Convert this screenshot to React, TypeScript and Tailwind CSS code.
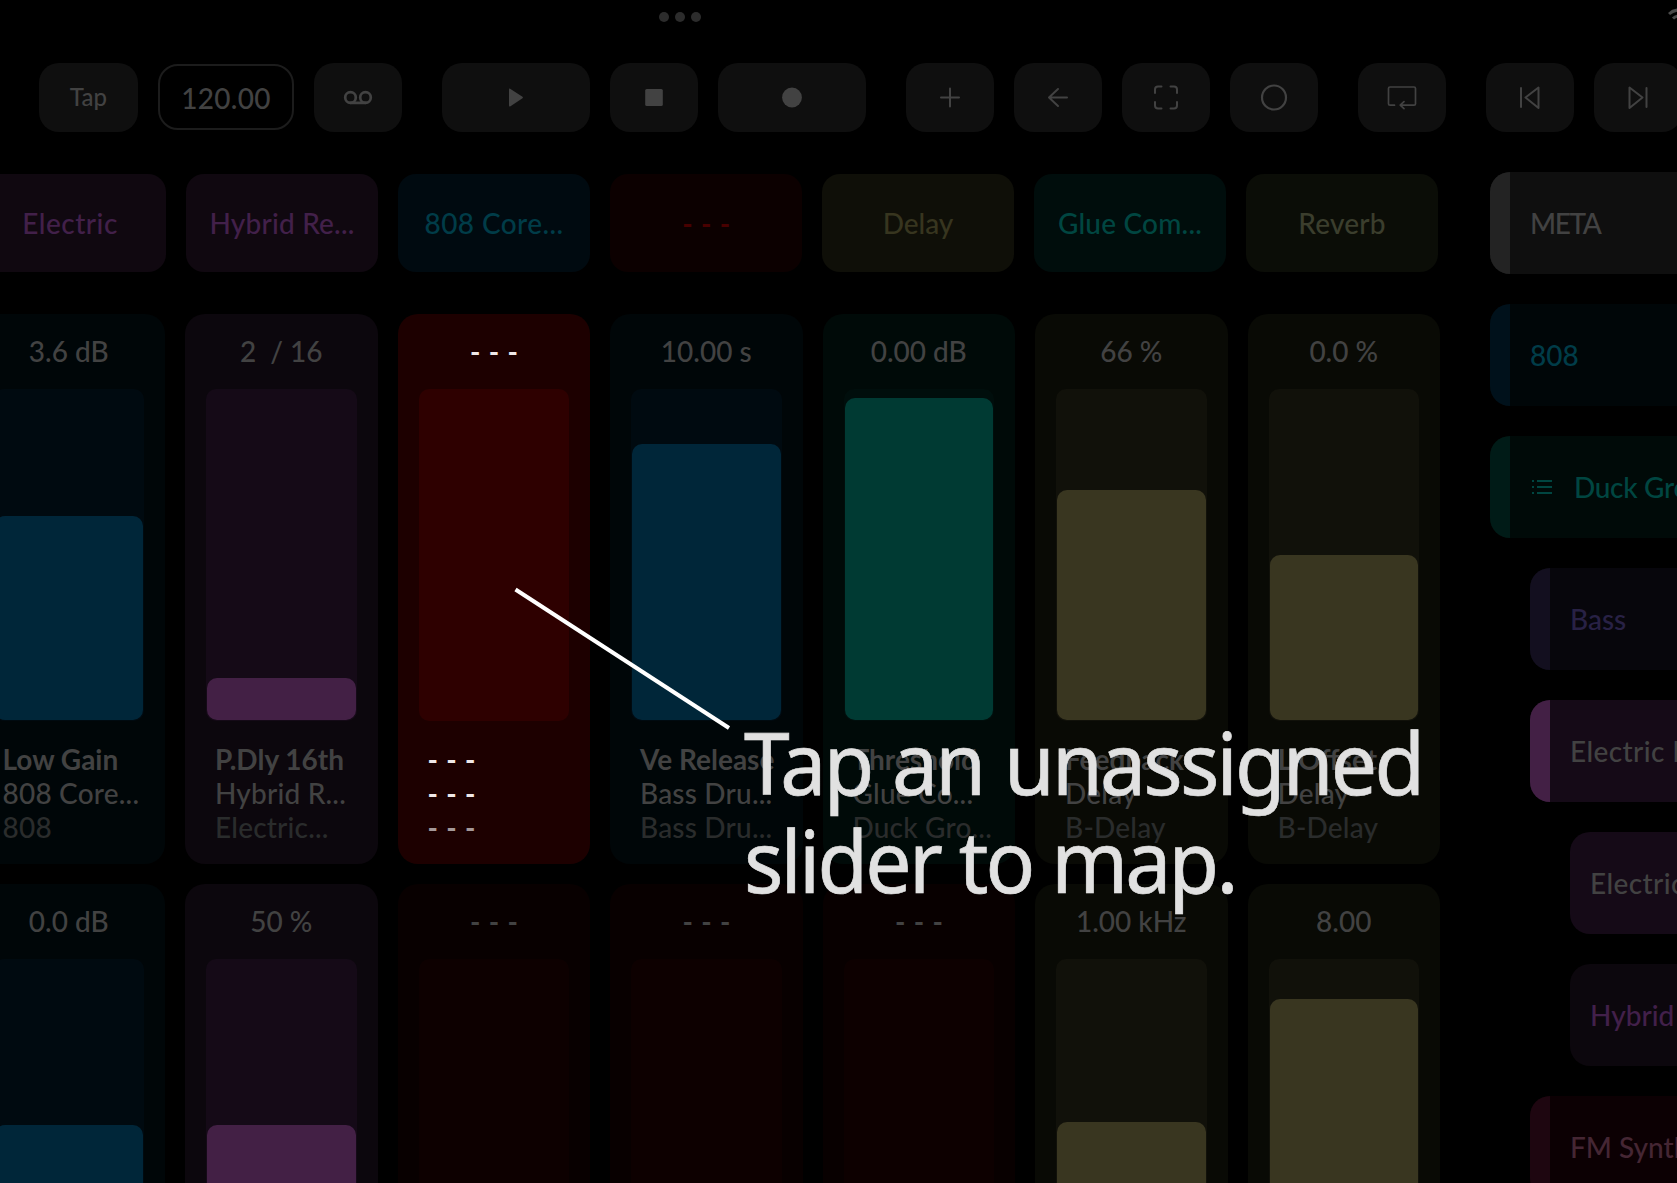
import React from "react";

type Tone = { card: string; track: string; fill: string };

const blue: Tone = { card: "bg-[#000608]", track: "bg-[#000a10]", fill: "bg-[#002639]" };
const purple: Tone = { card: "bg-[#0c070d]", track: "bg-[#150a17]", fill: "bg-[#432045]" };
const teal: Tone = { card: "bg-[#000a08]", track: "bg-[#000e0c]", fill: "bg-[#003a33]" };
const olive: Tone = { card: "bg-[#090a05]", track: "bg-[#11110a]", fill: "bg-[#393620]" };
const empty: Tone = { card: "bg-[#080000]", track: "bg-[#0d0000]", fill: "" };
const active: Tone = { card: "bg-[#1d0000]", track: "bg-[#2e0000]", fill: "" };

type Slider = { tone: Tone; value: string; level: number; labels?: string[]; lit?: boolean };

const DASH = "- - -";

const topRow: Slider[] = [
  { tone: blue, value: "3.6 dB", level: 204, labels: ["Low Gain", "808 Core...", "808"] },
  { tone: purple, value: "2  / 16", level: 42, labels: ["P.Dly 16th", "Hybrid R...", "Electric..."] },
  { tone: active, value: DASH, level: 0, labels: [DASH, DASH, DASH], lit: true },
  { tone: blue, value: "10.00 s", level: 276, labels: ["Ve Release", "Bass Dru...", "Bass Dru..."] },
  { tone: teal, value: "0.00 dB", level: 322, labels: ["Threshold", "Glue Co...", "Duck Gro..."] },
  { tone: olive, value: "66 %", level: 230, labels: ["Feedback", "Delay", "B-Delay"] },
  { tone: olive, value: "0.0 %", level: 165, labels: ["L Offset", "Delay", "B-Delay"] },
];

const bottomRow: Slider[] = [
  { tone: blue, value: "0.0 dB", level: 165 },
  { tone: purple, value: "50 %", level: 165 },
  { tone: empty, value: DASH, level: 0 },
  { tone: empty, value: DASH, level: 0 },
  { tone: empty, value: DASH, level: 0 },
  { tone: olive, value: "1.00 kHz", level: 168 },
  { tone: olive, value: "8.00", level: 291 },
];

const devices = [
  { name: "Electric", cls: "bg-[#100810] text-[#42204a] tracking-[0.5px]" },
  { name: "Hybrid Re...", cls: "bg-[#100810] text-[#42204a] tracking-[0.2px]" },
  { name: "808 Core...", cls: "bg-[#000a10] text-[#003c48] tracking-[0.4px]" },
  { name: DASH, cls: "bg-[#0c0000] text-[#480000]" },
  { name: "Delay", cls: "bg-[#0f0f08] text-[#37351f] -tracking-[0.1px]" },
  { name: "Glue Com...", cls: "bg-[#000d0c] text-[#004641] tracking-[0.2px]" },
  { name: "Reverb", cls: "bg-[#0b0d07] text-[#3b3e2d] tracking-[0.2px]" },
];

const tracks = [
  { name: "META", cls: "bg-[#0f0f0f] text-[#424242] tracking-[-1.4px]", stripe: "bg-[#232323]", indent: "" },
  { name: "808", cls: "bg-[#000608] text-[#003c48]", stripe: "bg-[#00111b]", indent: "" },
  { name: "Duck Group", cls: "bg-[#000a08] text-[#004641] -tracking-[0.3px]", stripe: "bg-[#001b17]", indent: "", list: true },
  { name: "Bass", cls: "bg-[#07060c] text-[#282145]", stripe: "bg-[#130f1f]", indent: "ml-10" },
  { name: "Electric Piano", cls: "bg-[#150a17] text-[#424242] tracking-[0.4px]", stripe: "bg-[#432045]", indent: "ml-10" },
  { name: "Electric", cls: "bg-[#150a17] text-[#424242] tracking-[0.4px]", indent: "ml-20" },
  { name: "Hybrid Reverb", cls: "bg-[#0c070d] text-[#42204a]", indent: "ml-20" },
  { name: "FM Synth", cls: "bg-[#0c0003] text-[#452633]", stripe: "bg-[#1e0610]", indent: "ml-10" },
];

function Label({ text, className = "" }: { text: string; className?: string }) {
  const spacing = text === DASH ? "tracking-[-0.5px] [word-spacing:2.5px] font-bold" : "";
  return <div className={`whitespace-pre ${spacing} ${className}`}>{text}</div>;
}

function SliderCard({ s }: { s: Slider }) {
  const main = s.lit ? "text-[#f0e8e8]" : "text-[#424242]";
  const dim = s.lit ? "text-[#a59999]" : "text-[#2a2c2c]";
  return (
    <div className={`flex h-[550px] flex-col rounded-[20px] px-5 ${s.tone.card}`}>
      <div className={`flex h-[74px] shrink-0 items-center justify-center pb-px ${main}`}>
        <Label text={s.value} />
      </div>
      <div className={`m-px flex h-[332px] shrink-0 flex-col justify-end rounded-[10px] p-px ${s.tone.track}`}>
        {s.level > 0 && <div className={`rounded-[10px] ${s.tone.fill}`} style={{ height: s.level }} />}
      </div>
      {s.labels && (
        <div className={`pl-[10px] pt-[20px] leading-[34px] ${main}`}>
          <Label text={s.labels[0]} className="font-bold" />
          <Label text={s.labels[1]} className={s.lit ? "" : "tracking-[0.2px]"} />
          <Label text={s.labels[2]} className={`${dim} ${s.lit ? "" : "tracking-[0.2px]"}`} />
        </div>
      )}
    </div>
  );
}

function Btn({ w = "w-[88px]", ml = "ml-5", children }: { w?: string; ml?: string; children: React.ReactNode }) {
  return (
    <button className={`flex h-[69px] shrink-0 items-center justify-center rounded-[20px] bg-[#0f0f0f] pb-px ${w} ${ml}`}>
      {children}
    </button>
  );
}

function Icon({ children, fill = "none", sw = 2 }: { children: React.ReactNode; fill?: string; sw?: number }) {
  return (
    <svg width="32" height="32" viewBox="0 0 32 32" fill={fill} stroke={fill === "none" ? "currentColor" : "none"} strokeWidth={sw} strokeLinecap="round" strokeLinejoin="round">
      {children}
    </svg>
  );
}

export default function App() {
  return (
    <div className="relative h-[1183px] w-[1677px] overflow-hidden bg-black font-['Lato',sans-serif] text-[28px] font-medium leading-[34px] text-[#424242]">
      <div className="flex h-[63px] justify-between pt-3">
        <div className="ml-[659px] flex gap-1.5">
          <span className="size-[10px] rounded-full bg-[#2c2c2c]" />
          <span className="size-[10px] rounded-full bg-[#2c2c2c]" />
          <span className="size-[10px] rounded-full bg-[#2c2c2c]" />
        </div>
        <svg className="-mt-1 -mr-[13px]" width="22" height="16" viewBox="0 0 22 16" fill="none" stroke="#4a4a4a" strokeWidth="3">
          <path d="M1 6a14.5 14.5 0 0 1 20 0M5 10.500a8.500 8.500 0 0 1 12 0" />
        </svg>
      </div>

      <div className="flex w-[1700px] items-start pl-[39px]">
        <Btn w="w-[99px]" ml=""><span className="text-[24px] tracking-[0.2px]">Tap</span></Btn>
        <div className="ml-5 mt-px flex h-[66px] w-[136px] items-center justify-center rounded-[20px] border-2 border-[#1c1c1c] pt-px tracking-[0.3px]">
          120.00
        </div>
        <Btn>
          <Icon sw={2.7}>
            <circle cx="8.500" cy="16.500" r="5.300" />
            <circle cx="23.500" cy="16.500" r="5.300" />
            <path d="M8.500 21.800h15" />
          </Icon>
        </Btn>
        <Btn w="w-[148px]" ml="ml-10">
          <Icon fill="currentColor"><path d="M9 8.700Q9 6.900 10.500 7.900L22.500 15.800Q23.500 16.500 22.500 17.200L10.500 25.200Q9 26.100 9 24.300Z" /></Icon>
        </Btn>
        <Btn><Icon fill="currentColor"><rect x="7.200" y="7.900" width="17.600" height="17.200" rx="1.500" /></Icon></Btn>
        <Btn w="w-[148px]"><Icon fill="currentColor"><circle cx="16" cy="16.500" r="9.900" /></Icon></Btn>
        <Btn ml="ml-10"><Icon><path d="M16 7.500v18M7 16.500h18" /></Icon></Btn>
        <Btn><Icon><path d="M25 16.500H7M16 8L7 16.500l9 8.500" /></Icon></Btn>
        <Btn>
          <Icon>
            <path d="M5 12V8.500q0-3 3-3h3.500M20.500 5.500H24q3 0 3 3v3.500M27 21V24.500q0 3-3 3h-3.500M11.500 27.500H8q-3 0-3-3v-3.500" />
          </Icon>
        </Btn>
        <Btn><Icon sw={2.2}><circle cx="16" cy="16.500" r="12" /></Icon></Btn>
        <Btn ml="ml-10">
          <Icon sw={1.7}>
            <path d="M8.500 24.200H4q-1.500 0-1.500-1.500V7.500q0-1.500 1.500-1.500h24q1.500 0 1.500 1.500v15.200q0 1.500-1.500 1.500H14.500M18 20.700l-3.800 3.500 3.800 3.500" />
          </Icon>
        </Btn>
        <Btn ml="ml-10"><Icon><path d="M7 7v19M24.500 6.500v20.500L11.500 16.500Z" /></Icon></Btn>
        <Btn><Icon><path d="M24.500 7v19M7.500 6.500v20.500L20.500 16.500Z" /></Icon></Btn>
      </div>

      <div className="flex pt-10">
        <div className="-ml-[27.5px] w-[1467.5px] shrink-0 pt-0.5">
          <div className="ml-[1.5px] flex gap-5">
            {devices.map((d, i) => (
              <div key={i} className={`flex h-[98px] w-48 shrink-0 items-center justify-center rounded-[18px] ${d.cls}`}>
                <Label text={d.name} />
              </div>
            ))}
          </div>
          <div className="mt-[42px] grid grid-cols-7 gap-5">
            {topRow.map((s, i) => <SliderCard key={i} s={s} />)}
            {bottomRow.map((s, i) => <SliderCard key={i} s={s} />)}
          </div>
        </div>
        <div className="ml-[50px] flex w-[420px] shrink-0 flex-col gap-[30px]">
          {tracks.map((t, i) => (
            <div key={i} className={`flex h-[102px] items-center overflow-hidden rounded-[20px] ${t.cls} ${t.indent}`}>
              {t.stripe && <div className={`h-full w-5 shrink-0 ${t.stripe}`} />}
              {t.list && (
                <svg className="ml-[21px] mr-px" width="22" height="16" viewBox="0 0 22 16" stroke="currentColor" strokeWidth="2">
                  <path d="M6 2h15M6 8h15M6 14h15M1 2h2M1 8h2M1 14h2" />
                </svg>
              )}
              <Label text={t.name} className="ml-5" />
            </div>
          ))}
        </div>
      </div>

      <svg className="absolute left-[500px] top-[580px]" width="240" height="160" viewBox="0 0 240 160" stroke="#fff" strokeWidth="4">
        <path d="M15.500 9.500L229 148" />
      </svg>
      <div className="absolute left-[744px] top-[713px] origin-left scale-x-[0.956] whitespace-nowrap font-['Noto_Sans',sans-serif] text-[86px] font-normal leading-[98px] tracking-[-2.9px] text-[#e1e1e1] [-webkit-text-stroke:0.7px_#e1e1e1]">
        <span className="[word-spacing:2px]">Tap an unassigned</span><br />slider to map.
      </div>
    </div>
  );
}
